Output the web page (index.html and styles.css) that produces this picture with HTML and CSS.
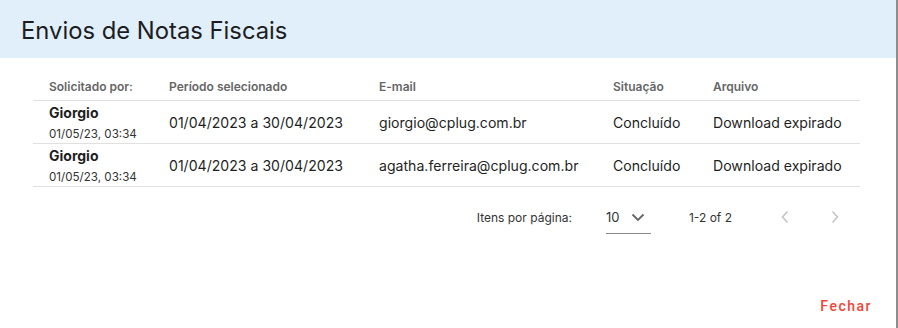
FILE: index.html
```html
<!DOCTYPE html>
<html lang="pt-BR">
<head>
<meta charset="utf-8">
<title>Envios de Notas Fiscais</title>
<link rel="stylesheet" href="styles.css">
</head>
<body>
<div class="dialog">
  <header class="dialog-header">
    <h1 class="dialog-title">Envios de Notas Fiscais</h1>
  </header>
  <div class="dialog-content">
    <div class="table">
      <div class="row head">
        <div class="cell">Solicitado por:</div>
        <div class="cell">Período selecionado</div>
        <div class="cell">E-mail</div>
        <div class="cell">Situação</div>
        <div class="cell">Arquivo</div>
      </div>
      <div class="row body">
        <div class="cell user"><span class="name">Giorgio</span><span class="date">01/05/23, 03:34</span></div>
        <div class="cell">01/04/2023 a 30/04/2023</div>
        <div class="cell">giorgio@cplug.com.br</div>
        <div class="cell">Concluído</div>
        <div class="cell">Download expirado</div>
      </div>
      <div class="row body">
        <div class="cell user"><span class="name">Giorgio</span><span class="date">01/05/23, 03:34</span></div>
        <div class="cell">01/04/2023 a 30/04/2023</div>
        <div class="cell">agatha.ferreira@cplug.com.br</div>
        <div class="cell">Concluído</div>
        <div class="cell">Download expirado</div>
      </div>
    </div>
    <div class="paginator">
      <span class="pg-label">Itens por página:</span>
      <div class="pg-select">
        <span>10</span>
        <svg class="chev" width="14" height="9" viewBox="0 0 14 9"><path d="M1.5 1.5 L7 7 L12.5 1.5" fill="none" stroke="#666" stroke-width="1.8"/></svg>
      </div>
      <span class="pg-range">1-2 of 2</span>
      <div class="pg-nav">
        <span class="pg-btn"><svg width="10" height="14" viewBox="0 0 10 14"><path d="M7.5 1.5 L2.5 7 L7.5 12.5" fill="none" stroke="#c4c4c4" stroke-width="1.6"/></svg></span>
        <span class="pg-btn"><svg width="10" height="14" viewBox="0 0 10 14"><path d="M2.5 1.5 L7.5 7 L2.5 12.5" fill="none" stroke="#c4c4c4" stroke-width="1.6"/></svg></span>
      </div>
    </div>
  </div>
  <footer class="dialog-actions">
    <button class="btn-close">Fechar</button>
  </footer>
</div>
</body>
</html>
```
FILE: styles.css
```css
* { box-sizing: border-box; }
html, body { margin: 0; padding: 0; }
body {
  background: #8d8d8d;
  font-family: Inter, "Noto Sans", sans-serif;
  color: #1f1f1f;
  width: 898px;
  height: 328px;
  overflow: hidden;
}
.dialog {
  width: 896px;
  height: 328px;
  background: #fff;
  display: flex;
  flex-direction: column;
}
.dialog-header {
  height: 58px;
  background: #e1effb;
  display: flex;
  align-items: center;
  padding-left: 21px;
}
.dialog-title {
  margin: 0;
  font-size: 23.8px;
  font-weight: 400;
  color: #1d1d1f;
  padding-top: 3px;
}
.dialog-content {
  padding: 13px 36px 0 33px;
}
.table { width: 827px; }
.row {
  display: grid;
  grid-template-columns: 120px 210px 234px 100px 1fr;
  padding-left: 16px;
  border-bottom: 1px solid #e0e0e0;
  align-items: center;
}
.row.head {
  height: 30px;
  font-size: 12px;
  font-weight: 600;
  color: #666;
  padding-top: 2px;
}
.row.body {
  height: 43px;
  font-size: 14.1px;
  padding-top: 1px;
}
.cell.user {
  display: flex;
  flex-direction: column;
  gap: 8px;
  font-size: 14px;
  line-height: 15px;
}
.name { font-weight: 700; font-size: 14px; }
.date { font-size: 11.6px; line-height: 13px; color: #333; }
.paginator {
  width: 827px;
  height: 60px;
  display: flex;
  align-items: center;
  justify-content: flex-end;
  font-size: 12px;
  color: #333;
  padding-right: 5px;
}
.pg-label { margin-right: 34px; }
.pg-select {
  width: 45px;
  height: 33px;
  border-bottom: 1px solid #8a8a8a;
  display: flex;
  align-items: center;
  justify-content: space-between;
  padding-right: 6px;
  margin-top: 14px;
  align-self: flex-start;
  font-size: 13px;
}
.pg-range { margin-left: 38px; margin-right: 33px; font-size: 12px; }
.pg-nav { display: flex; gap: 10px; }
.pg-btn {
  width: 40px;
  height: 40px;
  display: flex;
  align-items: center;
  justify-content: center;
}
.dialog-actions {
  margin-top: auto;
  display: flex;
  justify-content: flex-end;
  padding: 0 24px 14px 0;
}
.btn-close {
  background: none;
  border: none;
  font-family: Roboto, Inter, sans-serif;
  font-size: 14px;
  font-weight: 500;
  letter-spacing: 1.5px;
  color: #f44336;
  padding: 0;
  cursor: pointer;
}
```
